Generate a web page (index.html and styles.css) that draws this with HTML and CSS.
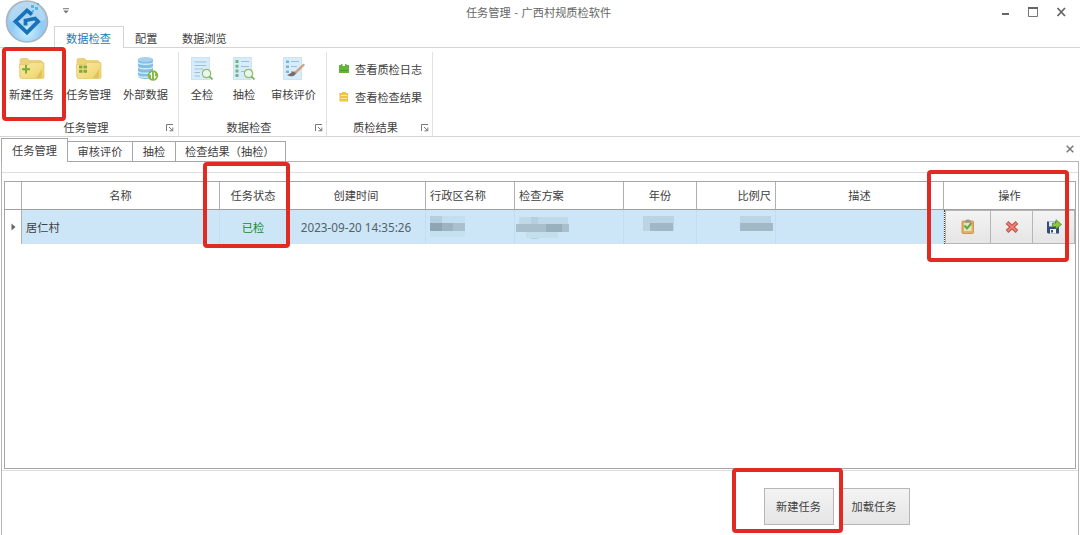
FILE: index.html
```html
<!DOCTYPE html>
<html lang="zh-CN">
<head>
<meta charset="utf-8">
<title>任务管理 - 广西村规质检软件</title>
<link rel="stylesheet" href="styles.css">
</head>
<body>
<svg width="0" height="0" class="defs">
  <defs>
    <linearGradient id="fold" x1="0" y1="0" x2="1" y2="1"><stop offset="0" stop-color="#f8e9a6"/><stop offset="1" stop-color="#f0d368"/></linearGradient>
    <radialGradient id="orb" cx=".5" cy=".75" r=".75"><stop offset="0" stop-color="#d0f1ff"/><stop offset=".5" stop-color="#8fcbf4"/><stop offset="1" stop-color="#abd0ec"/></radialGradient>
    <symbol id="folder" viewBox="0 0 26 24"><path d="M1 3Q1 1.500 2.500 1.500H8.500L10.500 3.500H21.500Q23 3.500 23 5V20H1Z" fill="#ecd27c" stroke="#dfc069" stroke-width=".6"/><path d="M.5 7.500H9.500L11.500 5.500H24.500L25 6V20Q25 21.500 23.500 21.500H2.500Q1 21.500 1 20Z" fill="url(#fold)" stroke="#e2c263" stroke-width=".7"/><path d="M17 21L23 12V19Q23 21 21 21Z" fill="#d9bb55" opacity=".75"/></symbol>
    <symbol id="doc" viewBox="0 0 24 26"><path d="M1.500 1.500H19.500V23.500H1.500Z" fill="#d9ecfa" stroke="#c3deF1" stroke-width=".8"/></symbol>
    <symbol id="lens" viewBox="0 0 12 12"><circle cx="5" cy="5" r="4.200" fill="#e9f7ee" stroke="#8fbd6b" stroke-width="1.200"/><path d="M8 8L11 11" stroke="#75a951" stroke-width="1.700"/></symbol>
    <symbol id="launch" viewBox="0 0 8 8"><path d="M.5 7V.5H7M3 3L6.500 6.500M6.800 3.500V6.800H3.500" fill="none" stroke="#777"/></symbol>
  </defs>
</svg>
<div class="window">
  <header class="titlebar">
    <span class="quick"><svg width="6" height="7" viewBox="0 0 6 7"><path d="M0 .7H6" stroke="#777"/><path d="M.3 2.500H5.700L3 5.500Z" fill="#777"/></svg></span>
    <h1 class="title">任务管理 - 广西村规质检软件</h1>
    <svg class="controls" width="70" height="16" viewBox="0 0 70 16"><path d="M2 10H9" stroke="#666" stroke-width="2"/><path d="M28.500 3.500H37.500V12.500H28.500Z" fill="none" stroke="#777"/><path d="M28 4H38" stroke="#666" stroke-width="2"/><path d="M57.500 4L65 12M65 4L57.500 12" stroke="#666" stroke-width="1.800"/></svg>
  </header>
  <nav class="ribbon-tabs"><a class="active">数据检查</a><a class="config">配置</a><a class="browse">数据浏览</a></nav>
  <section class="ribbon">
    <div class="group group-task">
      <div class="tools">
        <div class="tool wide"><svg width="28" height="26" viewBox="0 0 28 26"><use href="#folder" x="1" y="1" width="26" height="24"/><path d="M8 9V17.500M4 13.200H12" stroke="#79aa37" stroke-width="1.900"/></svg><span>新建任务</span></div>
        <div class="tool wide"><svg width="28" height="26" viewBox="0 0 28 26"><use href="#folder" x="1" y="1" width="26" height="24"/><path d="M4 9.500H7.500V12.500H4ZM8.500 9.500H12V12.500H8.500ZM4 13.700H7.500V16.700H4ZM8.500 13.700H12V16.700H8.500Z" fill="#82aa34"/></svg><span>任务管理</span></div>
        <div class="tool wide"><svg width="28" height="26" viewBox="0 0 28 26"><path d="M6 3V20C6 24 21 24 21 20V3" fill="#83bde3"/><ellipse cx="13.500" cy="3.500" rx="7.500" ry="2.500" fill="#a4d2ef"/><path d="M6 6C6 9 21 9 21 6M6 10.500C6 13.500 21 13.500 21 10.500M6 15C6 18 21 18 21 15M6 19C6 22 21 22 21 19" fill="none" stroke="#d4ecf9" stroke-width="1.300"/><circle cx="21" cy="19.500" r="5.200" fill="#84b945"/><path d="M19.500 22.500V17L17.800 18.500M22.500 16.500V22L24.200 20.500" fill="none" stroke="#fff" stroke-width="1.100"/></svg><span>外部数据</span></div>
      </div>
      <div class="caption"><span>任务管理</span><svg width="8" height="8"><use href="#launch"/></svg></div>
    </div>
    <div class="group group-check">
      <div class="tools">
        <div class="tool"><svg width="24" height="26" viewBox="0 0 24 26"><use href="#doc" width="24" height="26"/><path d="M4.500 6H16.500M4.500 9.500H16.500M4.500 13H13M4.500 16.500H10M4.500 20H10" stroke="#9bbfd8" stroke-width="1.200"/><use href="#lens" x="11.500" y="12.500" width="12" height="12"/></svg><span>全检</span></div>
        <div class="tool"><svg width="24" height="26" viewBox="0 0 24 26"><use href="#doc" width="24" height="26"/><path d="M3.500 4H6.500V7H3.500ZM3.500 8.700H6.500V11.700H3.500ZM3.500 13.400H6.500V16.400H3.500ZM3.500 18H6.500V21H3.500Z" fill="#6bb580"/><path d="M9 5.500H17M9 10.500H17M9 15.500H12" stroke="#9bbfd8" stroke-width="1.200"/><use href="#lens" x="11.500" y="12.500" width="12" height="12"/></svg><span>抽检</span></div>
        <div class="tool wide"><svg width="24" height="26" viewBox="0 0 24 26"><use href="#doc" width="24" height="26"/><path d="M4 4.500H7V7H4ZM4 9.500H7V12H4ZM4 14.500H7V17H4Z" fill="#78b2dd"/><path d="M9 5.500H17M9 10.500H15M9 15.500H11" stroke="#9bbfd8" stroke-width="1.200"/><path d="M12 16L21.500 7.500L23 9L14 18Z" fill="#d1a086"/><path d="M5 19C9 18 9 15.500 12 15.500L14 17.500C12 21 8 21 5 19Z" fill="#756e67"/></svg><span>审核评价</span></div>
      </div>
      <div class="caption"><span>数据检查</span><svg width="8" height="8"><use href="#launch"/></svg></div>
    </div>
    <div class="group group-result">
      <div class="links">
        <div class="link"><svg width="12" height="12" viewBox="0 0 12 12"><path d="M1 2H3V1H4.500V3H7V1H8.500V2H11V10H1Z" fill="#63b33c"/><path d="M2 7.500H10" stroke="#489a2e"/></svg><span>查看质检日志</span></div>
        <div class="link"><svg width="12" height="12" viewBox="0 0 12 12"><path d="M1.500 2H4V1H8V2H10V10.500H1.500Z" fill="#f2c247"/><path d="M3 4.500H9M3 7.500H9" stroke="#fff1bc"/></svg><span>查看检查结果</span></div>
      </div>
      <div class="caption"><span>质检结果</span><svg width="8" height="8"><use href="#launch"/></svg></div>
    </div>
  </section>
  <nav class="doc-tabs"><a class="active">任务管理</a><a class="review">审核评价</a><a class="sample">抽检</a><a class="results">检查结果（抽检）</a><span class="rest"><svg width="8" height="8" viewBox="0 0 8 8"><path d="M.7.7L7.300 7.300M7.300.7L.7 7.300" stroke="#777" stroke-width="1.500"/></svg></span></nav>
  <main class="panel">
    <div class="grid-wrap">
      <div class="table">
        <div class="row head"><span></span><span>名称</span><span>任务状态</span><span>创建时间</span><span class="left">行政区名称</span><span class="left">检查方案</span><span>年份</span><span class="right">比例尺</span><span>描述</span><span>操作</span></div>
        <div class="row record">
          <span class="marker"><svg width="5" height="8" viewBox="0 0 5 8"><path d="M.5.500L4.500 4L.5 7.500Z" fill="#666"/></svg></span>
          <span class="left">居仁村</span><span class="done">已检</span><span class="date">2023-09-20 14:35:26</span>
          <span class="left"><svg width="36" height="24" viewBox="0 0 36 24"><path d="M0 1H12V8H0Z" fill="#b5cedd"/><path d="M12 1H35V8H12Z" fill="#c3deee"/><path d="M0 8H12V16H0Z" fill="#8fa5b4"/><path d="M12 8H23V16H12Z" fill="#9db3c2"/><path d="M23 8H35V16H23Z" fill="#a9c0cf"/><path d="M0 16H35V22H0Z" fill="#c5e0f0"/></svg></span>
          <span class="plan"><svg width="53" height="24" viewBox="0 0 53 24"><path d="M3 1H52V8H3Z" fill="#bfd9e8"/><path d="M15 1H22V23H15Z" fill="#b5cfdf"/><path d="M0 8H53V16H0Z" fill="#a9bfce"/><path d="M30 8H46V16H30Z" fill="#99b0bf"/><path d="M10 16H42V22H10Z" fill="#c3deed"/></svg></span>
          <span><svg class="year-mask" width="31" height="24" viewBox="0 0 31 24"><path d="M0 1H31V16H0Z" fill="#bbd4e3"/><path d="M7 8H30V16H7Z" fill="#a0b7c7"/></svg></span>
          <span class="scale"><svg width="34" height="24" viewBox="0 0 34 24"><path d="M0 1H31V8H0Z" fill="#bcd5e4"/><path d="M0 8H33V16H0Z" fill="#a1b8c7"/></svg></span>
          <span></span>
          <div class="actions">
            <button><svg width="16" height="16" viewBox="0 0 16 16"><rect x="2" y="2" width="11.500" height="12.500" rx="1" fill="#e9ae5d" stroke="#c88a43" stroke-width=".8"/><path d="M4 4H11.500V12H4Z" fill="#dce6c8"/><path d="M5 3.500Q5 .5 8 .5Q11 .5 11 3.500Z" fill="#8f9a94"/><path d="M4.500 6.500L7 9.500L11.500 4" fill="none" stroke="#62a93c" stroke-width="2"/></svg></button>
            <button><svg width="16" height="16" viewBox="0 0 16 16"><path d="M3 3.500L13 12.500M13 3.500L3 12.500" stroke="#c34f48" stroke-width="4"/><path d="M3.500 4L12.500 12M12.500 4L3.500 12" stroke="#e7857c" stroke-width="1.700"/></svg></button>
            <button><svg width="16" height="16" viewBox="0 0 16 16"><path d="M1 2.500H12L13 3.500V14.500H2L1 13.500Z" fill="#354e79"/><path d="M3 2.500H9V7.500H3Z" fill="#dce8f4"/><path d="M4 10H10V14.500H4Z" fill="#f3f5f8"/><path d="M5 11H7V13.500H5Z" fill="#354e79"/><path d="M6.500 4H10V.8L15.500 5.500L10 10V7.500H6.500Z" fill="#8bc83b" stroke="#568c2e" stroke-width=".8"/></svg></button>
          </div>
        </div>
      </div>
    </div>
    <footer><button>新建任务</button><button>加载任务</button></footer>
  </main>
  <svg class="logo" width="44" height="44" viewBox="0 0 44 44"><circle cx="22" cy="21.500" r="20.500" fill="url(#orb)" stroke="#abb4bc" stroke-width="1.600"/><path d="M4 20A18 18 0 0 1 40 20Q22 27 4 20Z" fill="#fff" opacity=".22"/><path d="M27 14.500L22 10.500L10.500 21.500L22 32.500L33 21.500L30 18.500L20.500 20.500V25.500" fill="none" stroke="#1972b7" stroke-width="3.800"/><path d="M26 5H29V8H26ZM30 7H33V10H30ZM27 10H29V12H27ZM32 3H34V5H32Z" fill="#54b6e4"/></svg>
  <i class="mark mark-new"></i><i class="mark mark-status"></i><i class="mark mark-actions"></i><i class="mark mark-create"></i>
</div>
</body>
</html>
```
FILE: styles.css
```css
* { box-sizing: border-box; }
body { margin: 0; background: #fff; color: #404040; font: 11.2px/16px "Noto Sans", "Noto Sans CJK SC", sans-serif; }
.defs { position: absolute; }
.window { position: relative; width: 1080px; height: 535px; overflow: hidden; display: flex; flex-direction: column; font-family: "Noto Sans CJK SC", sans-serif; }
.logo { position: absolute; left: 5px; top: 0; }
svg { flex: none; display: block; }
.titlebar { height: 26px; display: grid; grid-template-columns: 1fr auto 1fr; align-items: center; }
.quick { padding: 0 0 3px 63px; }
.title { margin: 0 0 2px; font-size: 11.2px; font-weight: 400; color: #666; padding-right: 3px; white-space: pre; word-spacing: 1px; }
.controls { justify-self: end; margin-right: 10px; margin-bottom: 2px; }
.ribbon-tabs { height: 22px; display: flex; padding-left: 54px; border-bottom: 1px solid #d5d5d5; }
.ribbon-tabs a { line-height: 24px; }
.ribbon-tabs .active { width: 70px; height: 22px; text-align: center; color: #1b79b5; background: #fff; border: 1px solid #d5d5d5; border-bottom: 0; line-height: 22px; padding-right: 1px; }
.ribbon-tabs .config { padding-left: 11px; width: 58px; }
.ribbon { height: 89px; display: flex; border-bottom: 1px solid #d5d5d5; }
.group { display: flex; flex-direction: column; height: 84px; margin-top: 4px; border-right: 1px solid #e2e2e2; }
.group-task { width: 179px; padding-left: 3px; }
.group-check { width: 148px; padding-left: 2px; }
.group-result { width: 106px; }
.tools { height: 67px; display: flex; }
.tool { width: 42px; display: flex; flex-direction: column; align-items: center; gap: 4px; padding-top: 4px; white-space: nowrap; }
.tool.wide { width: 57px; }
.caption { height: 16px; display: grid; grid-template-columns: 1fr auto 1fr; align-items: center; }
.caption span { grid-column: 2; }
.caption svg { justify-self: end; margin-top: 2px; }
.group-task .caption { padding-right: 9px; }
.group-task .caption svg { margin-right: -5px; }
.group-check .caption { padding-right: 9px; }
.group-check .caption svg { margin-right: -6px; }
.group-result .caption { padding-right: 8px; }
.group-result .caption svg { margin-right: -5px; }
.links { height: 67px; display: flex; flex-direction: column; gap: 12px; padding: 9px 0 0 11px; }
.link { height: 16px; display: flex; align-items: center; gap: 5px; }
.doc-tabs { height: 24px; margin-top: 1px; display: flex; padding-left: 1px; }
.doc-tabs a { margin-top: 3px; height: 21px; border: 1px solid #a6a6a6; border-left: 0; line-height: 18px; text-align: center; white-space: nowrap; }
.doc-tabs .active { width: 67px; height: 24px; margin-top: 0; line-height: 23px; border-left: 1px solid #a6a6a6; border-bottom: 0; }
.doc-tabs .review { width: 65px; }
.doc-tabs .sample { width: 43px; }
.doc-tabs .results { width: 110px; text-align: left; padding-left: 9px; }
.rest { flex: 1; border-bottom: 1px solid #b5b5b5; display: flex; justify-content: flex-end; padding: 7px 5px 0 0; margin-right: 1px; }
.panel { flex: 1; margin: 0 1px; border: solid #b5b5b5; border-width: 0 1px; padding-top: 10px; }
.grid-wrap { height: 299px; border: solid #dedede; border-width: 1px 0; padding: 8px 2px 1px 2px; }
.table { height: 288px; border: 1px solid #a6a6a6; }
.row { display: grid; grid-template-columns: 17px 198px 67px 139px 89px 109px 73px 79px 168px 1fr; }
.row > span { display: flex; align-items: center; justify-content: center; border-right: 1px solid #b0b0b0; }
.row > .left { justify-content: flex-start; padding-left: 4px; }
.row > .right { justify-content: flex-end; padding-right: 4px; }
.head { height: 28px; border-bottom: 1px solid #a0a0a0; }
.head > span { padding-bottom: 1px; }
.head > span:last-child { border-right: 0; }
.record { height: 34px; }
.record > span { background: #cce6f7; border-right: 1px solid #c2ddec; padding-bottom: 1px; }
.record > .marker { background: #fff; border-right-color: #b0b0b0; }
.record .done { color: #128b29; }
.record .date { font-family: "Noto Sans", sans-serif; font-size: 11.7px; color: #53616a; white-space: nowrap; }
.row > .plan { justify-content: flex-start; padding: 2px 0 0 1px; }
.row > .scale { justify-content: flex-end; padding-right: 1px; }
.year-mask { margin-right: 4px; }
.actions { display: grid; grid-template-columns: 46px 42px 1fr; border-left: 1px dotted #444; }
.actions button { padding: 0; display: flex; align-items: center; justify-content: center; }
button { font: inherit; color: #404040; border: 1px solid #b6b6b6; background: linear-gradient(#f3f3f3, #e5e5e5); }
.actions button + button { border-left: 0; }
footer { display: flex; gap: 5px; padding: 17px 0 0 762px; }
footer button { width: 70px; height: 37px; padding: 0 1px 1px 0; }
footer button + button { width: 71px; }
.mark { position: absolute; border: 4px solid #e12b22; border-radius: 4px; }
.mark-new { left: 2px; top: 47px; width: 64px; height: 74px; }
.mark-status { left: 203px; top: 162px; width: 87px; height: 86px; }
.mark-actions { left: 927px; top: 170px; width: 142px; height: 92px; }
.mark-create { left: 732px; top: 468px; width: 111px; height: 65px; }
```
